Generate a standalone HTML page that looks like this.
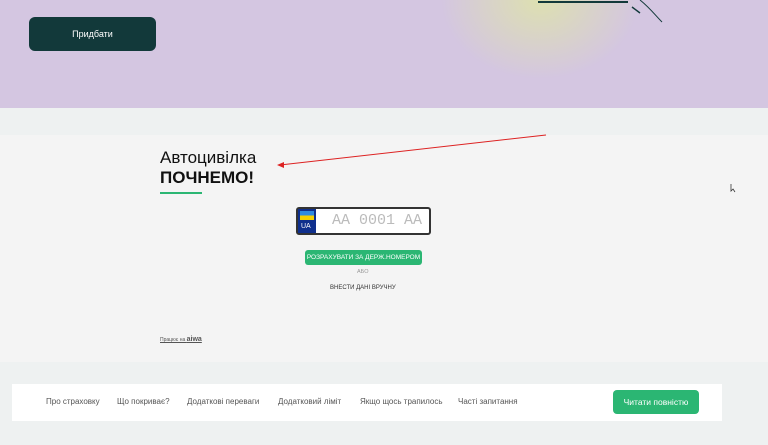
<!DOCTYPE html>
<html><head><meta charset="utf-8"><style>
*{margin:0;padding:0;box-sizing:border-box}
body{width:768px;height:445px;overflow:hidden;background:#eef1f1;font-family:"Liberation Sans",sans-serif;position:relative}
.top{position:absolute;left:0;top:0;width:768px;height:108px;background:#d4c6e1;overflow:hidden}
.glow{position:absolute;left:440px;top:-80px;width:200px;height:160px;border-radius:50%;background:radial-gradient(#dde0b0 0%,rgba(221,224,176,0.5) 35%,rgba(212,198,225,0) 70%)}
.btn1{position:absolute;left:29px;top:17px;width:127px;height:34px;background:#12393a;border-radius:6px;color:#fff;font-size:9px;display:flex;align-items:center;justify-content:center}
.main{position:absolute;left:0;top:135px;width:768px;height:227px;background:#f4f4f4}
.h1{position:absolute;left:160px;top:148px;font-size:17px;color:#111;line-height:20px}
.h1 b{font-weight:bold}
.line{position:absolute;left:160px;top:192px;width:42px;height:2px;background:#2bb673}
.plate{position:absolute;left:296px;top:207px;width:135px;height:28px;border:2px solid #333;border-radius:3px;background:#fff}
.ua{position:absolute;left:0;top:0;width:18px;height:24px;background:#0f2f8c}
.flag{position:absolute;left:2px;top:2px;width:14px;height:9px;background:linear-gradient(#2f8ae0 50%,#f5d000 50%)}
.ua span{position:absolute;left:3px;top:14px;color:#fff;font-size:7px}
.num{position:absolute;left:34px;top:3px;font-family:"Liberation Mono",monospace;font-size:15px;color:#bbb}
.btn2{position:absolute;left:305px;top:250px;width:117px;height:15px;background:#2bb673;border-radius:3px;color:#fff;font-size:6.5px;display:flex;align-items:center;justify-content:center}
.abo{position:absolute;left:357px;top:269px;font-size:5.5px;color:#999}
.manual{position:absolute;left:330px;top:285px;font-size:6px;color:#333}
.pw{position:absolute;left:160px;top:336px;font-size:5px;color:#555;text-decoration:underline}
.pw b{font-size:7px}
.nav{position:absolute;left:12px;top:384px;width:710px;height:37px;background:#fff}
.nav a{position:absolute;top:13px;font-size:8px;color:#555}
.btn3{position:absolute;left:613px;top:390px;width:86px;height:24px;background:#2bb673;border-radius:4px;color:#fff;font-size:8.5px;display:flex;align-items:center;justify-content:center}
</style></head><body>
<div class="top"><div class="glow"></div>
<svg style="position:absolute;left:500px;top:0" width="170" height="25"><path d="M38 2 H128" stroke="#12393a" stroke-width="2"/><path d="M140 0 C150 8 155 15 162 22" stroke="#12393a" stroke-width="1" fill="none"/><path d="M132 7 L140 13" stroke="#12393a" stroke-width="1.5"/></svg>
</div>
<div class="btn1">Придбати</div>
<div class="main"></div>
<svg style="position:absolute;left:0;top:0" width="768" height="445"><line x1="546" y1="135" x2="280" y2="165" stroke="#d22" stroke-width="1"/><path d="M277 165 L284 162 L284 168 Z" fill="#d22"/><path d="M731 184 L731 191 L733 189 L735 192" stroke="#333" stroke-width="0.8" fill="#fff"/></svg>
<div class="h1">Автоцивілка<br><b>ПОЧНЕМО!</b></div>
<div class="line"></div>
<div class="plate"><div class="ua"><div class="flag"></div><span>UA</span></div><div class="num">AA 0001 AA</div></div>
<div class="btn2">РОЗРАХУВАТИ ЗА ДЕРЖ.НОМЕРОМ</div>
<div class="abo">АБО</div>
<div class="manual">ВНЕСТИ ДАНІ ВРУЧНУ</div>
<div class="pw">Працює на <b>aiwa</b></div>
<div class="nav">
<a style="left:34px">Про страховку</a>
<a style="left:105px">Що покриває?</a>
<a style="left:175px">Додаткові переваги</a>
<a style="left:266px">Додатковий ліміт</a>
<a style="left:348px">Якщо щось трапилось</a>
<a style="left:446px">Часті запитання</a>
</div>
<div class="btn3">Читати повністю</div>
</body></html>
